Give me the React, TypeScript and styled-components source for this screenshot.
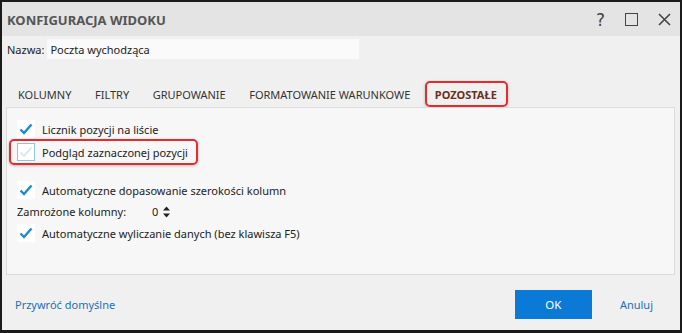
import React from 'react';
import styled, { createGlobalStyle } from 'styled-components';

const GlobalStyle = createGlobalStyle`
    html, body {
        margin: 0;
        padding: 0;
        background: #ffffff;
    }
    body {
        font-family: "Noto Sans", "Open Sans", sans-serif;
    }
`;

const tabs = ['KOLUMNY', 'FILTRY', 'GRUPOWANIE', 'FORMATOWANIE WARUNKOWE', 'POZOSTAŁE'];

function Check({ on, faded }: { on?: boolean; faded?: boolean }) {
    return (
        <Box $faded={faded}>
            {on && (
                <svg width="14" height="12" viewBox="0 0 14 12">
                    <path d="M1.5 6.5 L5 10 L12.5 1.5" fill="none" stroke="#1a8ad4" strokeWidth="2.4" />
                </svg>
            )}
            {faded && (
                <svg width="14" height="12" viewBox="0 0 14 12">
                    <path d="M1.5 6.5 L5 10 L12.5 1.5" fill="none" stroke="#cfe6f5" strokeWidth="1.6" />
                </svg>
            )}
        </Box>
    );
}

function App() {
    return (
        <>
            <GlobalStyle />
            <Dialog>
                <TitleBar>
                    <Title>KONFIGURACJA WIDOKU</Title>
                    <TitleButtons>
                        <span>?</span>
                        <MaxIcon />
                        <svg width="13" height="13" viewBox="0 0 13 13">
                            <path d="M1 1 L12 12 M12 1 L1 12" stroke="#444" strokeWidth="1.6" />
                        </svg>
                    </TitleButtons>
                </TitleBar>
                <Body>
                    <NameRow>
                        <Label>Nazwa:</Label>
                        <NameInput>Poczta wychodząca</NameInput>
                    </NameRow>
                    <Tabs>
                        {tabs.map((t) => (
                            <Tab key={t} $active={t === 'POZOSTAŁE'}>{t}</Tab>
                        ))}
                    </Tabs>
                    <Panel>
                        <Row>
                            <Check on />
                            <span>Licznik pozycji na liście</span>
                        </Row>
                        <Row $marked>
                            <Check faded />
                            <span>Podgląd zaznaczonej pozycji</span>
                        </Row>
                        <Row $space>
                            <Check on />
                            <span>Automatyczne dopasowanie szerokości kolumn</span>
                        </Row>
                        <FrozenRow>
                            <span>Zamrożone kolumny:</span>
                            <Spin>
                                <Num>0</Num>
                                <svg width="7" height="12" viewBox="0 0 7 12">
                                    <path d="M3.5 0.5 L7 4.5 L0 4.5 Z M0 7.5 L7 7.5 L3.5 11.5 Z" fill="#222" />
                                </svg>
                            </Spin>
                        </FrozenRow>
                        <Row>
                            <Check on />
                            <span>Automatyczne wyliczanie danych (bez klawisza F5)</span>
                        </Row>
                    </Panel>
                    <Footer>
                        <LinkButton>Przywróć domyślne</LinkButton>
                        <Actions>
                            <OkButton>OK</OkButton>
                            <LinkButton>Anuluj</LinkButton>
                        </Actions>
                    </Footer>
                </Body>
            </Dialog>
        </>
    );
}

const Dialog = styled.div`
    width: 682px;
    height: 333px;
    box-sizing: border-box;
    border: 2px solid #1b1b1b;
    border-bottom-width: 3px;
    background: #f0f0f0;
    display: flex;
    flex-direction: column;
    overflow: hidden;
`;

const TitleBar = styled.div`
    height: 34px;
    background: #e4e4e4;
    display: flex;
    align-items: center;
    justify-content: space-between;
    padding: 1px 9px 0 5px;
    box-sizing: border-box;
    flex-shrink: 0;
`;

const Title = styled.div`
    font-size: 13px;
    font-weight: 700;
    color: #555;
`;

const TitleButtons = styled.div`
    display: flex;
    align-items: center;
    gap: 20px;
    font-size: 17px;
    color: #444;
    font-family: "DejaVu Sans", sans-serif;
`;

const MaxIcon = styled.div`
    width: 11px;
    height: 11px;
    border: 1.6px solid #444;
`;

const Body = styled.div`
    flex: 1;
    display: flex;
    flex-direction: column;
    padding: 3px 5px 0 4px;
`;

const NameRow = styled.div`
    display: flex;
    align-items: center;
    gap: 3px;
    height: 20px;
`;

const Label = styled.span`
    font-size: 11px;
    color: #222;
    padding-left: 1px;
`;

const NameInput = styled.div`
    width: 309px;
    height: 20px;
    background: #fafafa;
    font-size: 11px;
    color: #222;
    display: flex;
    align-items: center;
    padding-left: 3px;
`;

const Tabs = styled.div`
    display: flex;
    align-items: center;
    margin-top: 22px;
    padding-left: 4px;
    height: 26px;
`;

const Tab = styled.div<{ $active?: boolean }>`
    font-size: 11px;
    color: ${(p) => (p.$active ? '#6b2f1c' : '#333')};
    font-weight: ${(p) => (p.$active ? 700 : 400)};
    padding: 0 8px;
    height: 26px;
    display: flex;
    align-items: center;
    box-sizing: border-box;
    margin-right: ${(p) => (p.$active ? '0' : '7.5px')};
    ${(p) =>
        p.$active &&
        `
        border: 2px solid #e52b2b;
        border-radius: 5px;
        box-shadow: 0 1px 3px rgba(0,0,0,0.25);
        margin-left: -1px;
        padding: 0 9px 0 8px;
    `}
`;

const Panel = styled.div`
    height: 168px;
    box-sizing: border-box;
    background: #f7f7f7;
    border: 1px solid #dcdcdc;
    padding: 10px 0 0 10px;
    display: flex;
    flex-direction: column;
    align-items: flex-start;
`;

const Row = styled.div<{ $marked?: boolean; $space?: boolean }>`
    display: flex;
    align-items: center;
    gap: 7px;
    font-size: 11px;
    color: #222;
    height: 22px;
    margin-top: ${(p) => (p.$space ? '14px' : '0')};
    ${(p) =>
        p.$marked &&
        `
        border: 2px solid #e52b2b;
        border-radius: 5px;
        box-shadow: 0 1px 3px rgba(0,0,0,0.25);
        padding: 0 8px 0 6px;
        margin: -1px 0 0 -8px;
        height: 26px;
        box-sizing: border-box;
    `}
`;

const Box = styled.div<{ $faded?: boolean }>`
    width: 18px;
    height: 18px;
    box-sizing: border-box;
    background: #fff;
    border: 1px solid ${(p) => (p.$faded ? '#8fc3e6' : '#fff')};
    display: flex;
    align-items: center;
    justify-content: center;
`;

const FrozenRow = styled.div`
    display: flex;
    align-items: center;
    font-size: 11px;
    color: #222;
    height: 21px;
`;

const Spin = styled.div`
    display: flex;
    align-items: center;
    gap: 5px;
    margin-left: 26px;
`;

const Num = styled.span`
    color: #222;
`;

const Footer = styled.div`
    flex: 1;
    display: flex;
    align-items: center;
    justify-content: space-between;
    padding: 4px 22px 0 9px;
`;

const Actions = styled.div`
    display: flex;
    align-items: center;
    gap: 28px;
`;

const LinkButton = styled.span`
    font-size: 11px;
    color: #1b6fb8;
`;

const OkButton = styled.div`
    width: 77px;
    height: 29px;
    background: #0a7ad6;
    color: #fff;
    font-size: 11.5px;
    display: flex;
    align-items: center;
    justify-content: center;
`;

export default App;
